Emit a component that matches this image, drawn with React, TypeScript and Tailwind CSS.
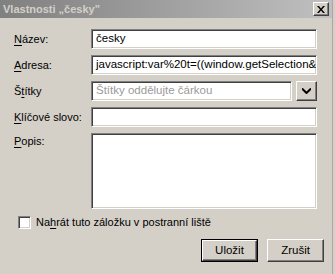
const sunken =
  'bg-white border border-t-[#808080] border-l-[#808080] border-b-white border-r-white shadow-[inset_1px_1px_0_#404040,inset_-1px_-1px_0_#d4d0c8]';
const raised =
  'bg-[#d4d0c8] border border-t-white border-l-white border-b-[#404040] border-r-[#404040] shadow-[inset_-1px_-1px_0_#808080]';

function Label({ pre, u, post }: { pre?: string; u: string; post: string }) {
  return (
    <span className="text-[11px] text-black leading-none">
      {pre}
      <span className="underline underline-offset-2">{u}</span>
      {post}
    </span>
  );
}

export default function App() {
  return (
    <div
      className="w-[335px] h-[274px] bg-[#d4d0c8] flex overflow-hidden"
      style={{ fontFamily: '"Liberation Sans", Arial, sans-serif' }}
    >
      <div className="w-[332px] flex flex-col">
        {/* title bar */}
        <div className="h-[18px] flex items-center justify-between pl-[3px] pr-[3px] bg-gradient-to-r from-[#808080] to-[#c0c0c0]">
          <span className="text-[11px] font-bold text-[#d4d0c8] leading-none">Vlastnosti „česky"</span>
          <div className={`${raised} w-[16px] h-[14px] flex items-center justify-center`}>
            <svg width="8" height="7" viewBox="0 0 8 7">
              <path d="M0 0h2l2 2.5L6 0h2L5 3.5 8 7H6L4 4.5 2 7H0l3-3.5z" fill="#000" />
            </svg>
          </div>
        </div>

        {/* form */}
        <div className="flex flex-col gap-[6px] pt-[11px] pl-[14px] pr-[15px] text-[11px] leading-none">
          <div className="flex items-center h-[20px]">
            <div className="w-[77px]">
              <Label u="N" post="ázev:" />
            </div>
            <div className={`${sunken} flex-1 h-[20px] flex items-center px-[4px] text-[11.5px] text-black`}>česky</div>
          </div>
          <div className="flex items-center h-[20px]">
            <div className="w-[77px]">
              <Label u="A" post="dresa:" />
            </div>
            <div className={`${sunken} flex-1 h-[20px] flex items-center px-[4px] text-[11.5px] text-black overflow-hidden whitespace-nowrap`}>
              javascript:var%20t=((window.getSelection&amp;
            </div>
          </div>
          <div className="flex items-center h-[20px]">
            <div className="w-[77px]">
              <Label pre="Š" u="t" post="ítky" />
            </div>
            <div className={`${sunken} flex-1 h-[20px] flex items-center px-[4px] text-[11.5px] text-[#9a9a9a]`}>
              Štítky oddělujte čárkou
            </div>
            <div className={`${raised} ml-[4px] w-[21px] h-[20px] flex items-center justify-center`}>
              <svg width="9" height="6" viewBox="0 0 9 6">
                <path d="M0 0.5L4.5 5 9 0.5" stroke="#000" strokeWidth="2" fill="none" />
              </svg>
            </div>
          </div>
          <div className="flex items-center h-[20px]">
            <div className="w-[77px]">
              <Label u="K" post="líčové slovo:" />
            </div>
            <div className={`${sunken} flex-1 h-[20px]`} />
          </div>
          <div className="flex items-start h-[76px]">
            <div className="w-[77px] pt-[3px]">
              <Label u="P" post="opis:" />
            </div>
            <div className={`${sunken} flex-1 h-[76px]`} />
          </div>
        </div>

        {/* checkbox */}
        <div className="flex items-center gap-[5px] pl-[18px] mt-[7px] h-[13px] leading-none">
          <div className={`${sunken} w-[13px] h-[13px]`} />
          <Label pre="Na" u="h" post="rát tuto záložku v postranní liště" />
        </div>

        {/* buttons */}
        <div className="flex justify-end gap-[9px] pr-[8px] mt-[10px]">
          <div className="border border-black">
            <div className={`${raised} w-[55px] h-[21px] flex items-center justify-center text-[11.5px] text-black`}>Uložit</div>
          </div>
          <div className={`${raised} w-[57px] h-[23px] flex items-center justify-center text-[11.5px] text-black`}>Zrušit</div>
        </div>
      </div>
      <div className="w-[3px] flex">
        <div className="w-[1px] bg-[#a8a8a8]" />
        <div className="w-[2px] bg-[#d4d0c8]" />
      </div>
    </div>
  );
}
